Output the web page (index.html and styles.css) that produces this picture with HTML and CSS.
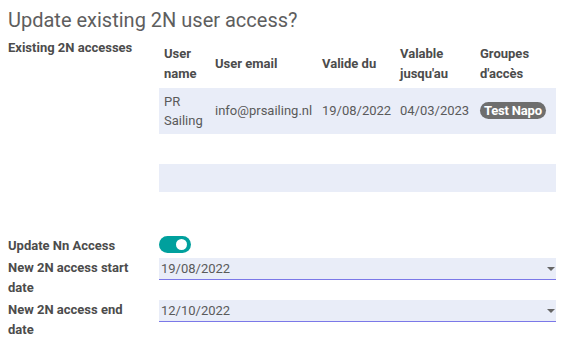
FILE: index.html
```html
<!DOCTYPE html>
<html lang="en">

<head>
    <meta charset="UTF-8">
    <meta name="viewport" content="width=device-width, initial-scale=1.0">
    <title>Update existing 2N user access?</title>
    <link rel="stylesheet" href="styles.css">
</head>

<body>
    <h4 class="title">Update existing 2N user access?</h4>

    <div class="form">
        <div class="label">Existing 2N accesses</div>
        <div class="field">
            <table class="list">
                <colgroup>
                    <col style="width: 51px">
                    <col style="width: 107px">
                    <col style="width: 78px">
                    <col style="width: 80px">
                    <col style="width: 81px">
                </colgroup>
                <thead>
                    <tr>
                        <th>User name</th>
                        <th>User email</th>
                        <th>Valide du</th>
                        <th>Valable jusqu'au</th>
                        <th>Groupes d'accès</th>
                    </tr>
                </thead>
                <tbody>
                    <tr class="data">
                        <td>PR Sailing</td>
                        <td>info@prsailing.nl</td>
                        <td>19/08/2022</td>
                        <td>04/03/2023</td>
                        <td><span class="badge">Test Napo</span></td>
                    </tr>
                    <tr class="empty">
                        <td colspan="5"></td>
                    </tr>
                </tbody>
                <tfoot>
                    <tr>
                        <td colspan="5"></td>
                    </tr>
                </tfoot>
            </table>
        </div>
    </div>

    <div class="form options">
        <div class="label">Update Nn Access</div>
        <div class="field">
            <span class="toggle"><span class="knob"></span></span>
        </div>

        <div class="label">New 2N access start date</div>
        <div class="field">
            <div class="select">19/08/2022<span class="caret"></span></div>
        </div>

        <div class="label">New 2N access end date</div>
        <div class="field">
            <div class="select">12/10/2022<span class="caret"></span></div>
        </div>
    </div>
</body>

</html>
```

FILE: styles.css
```css
body,
h4,
table {
    margin: 0;
    padding: 0;
}

body {
    padding: 8px;
    background: #fff;
    color: #4c4c4c;
    font: 13px/20px Roboto, "Liberation Sans", sans-serif;
}

.title {
    font-size: 20px;
    line-height: 24px;
    font-weight: 400;
    color: #5e5e5e;
    margin-bottom: 6px;
}

.form {
    display: grid;
    grid-template-columns: 151px 397px;
}

.label {
    font-weight: 700;
    line-height: 19.5px;
    padding-right: 16px;
}

/* table */
.list {
    width: 397px;
    table-layout: fixed;
    border-collapse: collapse;
    margin-top: 1px;
}

.list th {
    text-align: left;
    font-weight: 700;
    padding: 5px 5px 4px;
    line-height: 20px;
    vertical-align: middle;
}

.list td {
    padding: 3px 5px;
    line-height: 19.5px;
    color: #5a5a5a;
    vertical-align: middle;
}

.list .data td {
    background: #e9edf8;
    height: 40px;
}

.list .empty td {
    height: 24px;
}

.list tfoot td {
    background: #e9edf8;
    height: 22px;
}

.badge {
    display: inline-block;
    background: #6e6e6e;
    color: #fff;
    font-weight: 700;
    font-size: 13px;
    line-height: 17px;
    padding: 0 4px;
    border-radius: 9px;
    letter-spacing: -0.2px;
}

/* lower fields */
.options {
    margin-top: 44px;
}

.toggle {
    display: block;
    position: relative;
    width: 32px;
    height: 17px;
    margin-bottom: 5px;
    border-radius: 9px;
    background: #00a09d;
}

.toggle .knob {
    position: absolute;
    top: 3px;
    right: 4px;
    width: 11px;
    height: 11px;
    border-radius: 50%;
    background: #fff;
}

.select {
    position: relative;
    height: 21px;
    line-height: 21px;
    padding-left: 2px;
    background: #e9edf8;
    border-bottom: 1px solid #7b78e8;
    color: #5a5a5a;
    margin-bottom: 20px;
}

.caret {
    position: absolute;
    right: 1px;
    top: 9px;
    border-left: 4px solid transparent;
    border-right: 4px solid transparent;
    border-top: 4px solid #666;
}
```
